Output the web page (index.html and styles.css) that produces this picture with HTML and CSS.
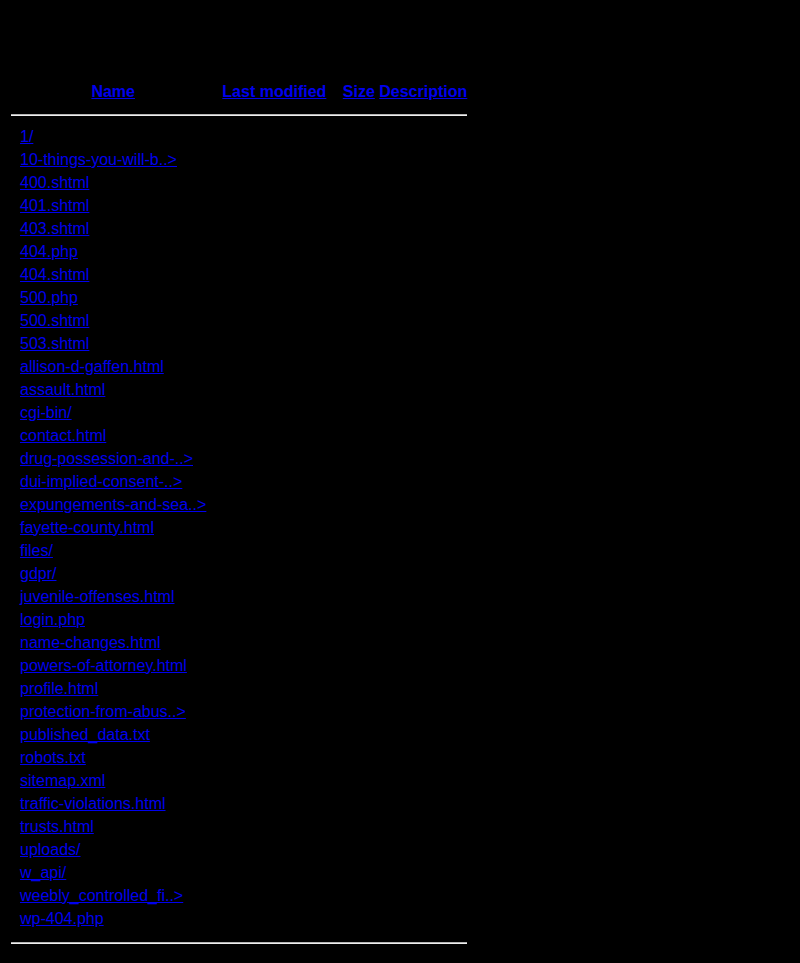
FILE: index.html
```html
<!DOCTYPE html>
<html lang="en">

<head>
    <meta charset="UTF-8">
    <title>Index of /</title>
    <link rel="stylesheet" href="styles.css">
</head>

<body>
    <h1 class="title">Index of /</h1>
    <table class="listing">
        <tr class="head">
            <th class="icon"></th>
            <th><a href="?C=N;O=D">Name</a></th>
            <th class="date"><a href="?C=M;O=A">Last modified</a></th>
            <th><a href="?C=S;O=A">Size</a></th>
            <th><a href="?C=D;O=A">Description</a></th>
        </tr>
        <tr><th colspan="5"><hr class="rule-top"></th></tr>
        <tr><td class="icon"></td><td><a href="1/">1/</a></td><td class="date">2021-03-02 09:14</td><td class="size">-</td><td>&nbsp;</td></tr>
        <tr><td class="icon"></td><td><a href="10-things-you-will-be-asked.html">10-things-you-will-b..&gt;</a></td><td class="date">2022-08-17 16:40</td><td class="size">18K</td><td>&nbsp;</td></tr>
        <tr><td class="icon"></td><td><a href="400.shtml">400.shtml</a></td><td class="date">2020-11-05 12:31</td><td class="size">228</td><td>&nbsp;</td></tr>
        <tr><td class="icon"></td><td><a href="401.shtml">401.shtml</a></td><td class="date">2020-11-05 12:31</td><td class="size">0</td><td>&nbsp;</td></tr>
        <tr><td class="icon"></td><td><a href="403.shtml">403.shtml</a></td><td class="date">2020-11-05 12:31</td><td class="size">0</td><td>&nbsp;</td></tr>
        <tr><td class="icon"></td><td><a href="404.php">404.php</a></td><td class="date">2022-08-17 16:40</td><td class="size">7.1K</td><td>&nbsp;</td></tr>
        <tr><td class="icon"></td><td><a href="404.shtml">404.shtml</a></td><td class="date">2020-11-05 12:31</td><td class="size">0</td><td>&nbsp;</td></tr>
        <tr><td class="icon"></td><td><a href="500.php">500.php</a></td><td class="date">2022-08-17 16:40</td><td class="size">3.2K</td><td>&nbsp;</td></tr>
        <tr><td class="icon"></td><td><a href="500.shtml">500.shtml</a></td><td class="date">2020-11-05 12:31</td><td class="size">0</td><td>&nbsp;</td></tr>
        <tr><td class="icon"></td><td><a href="503.shtml">503.shtml</a></td><td class="date">2020-11-05 12:31</td><td class="size">0</td><td>&nbsp;</td></tr>
        <tr><td class="icon"></td><td><a href="allison-d-gaffen.html">allison-d-gaffen.html</a></td><td class="date">2022-08-17 16:40</td><td class="size">16K</td><td>&nbsp;</td></tr>
        <tr><td class="icon"></td><td><a href="assault.html">assault.html</a></td><td class="date">2022-08-17 16:40</td><td class="size">15K</td><td>&nbsp;</td></tr>
        <tr><td class="icon"></td><td><a href="cgi-bin/">cgi-bin/</a></td><td class="date">2020-11-05 12:31</td><td class="size">-</td><td>&nbsp;</td></tr>
        <tr><td class="icon"></td><td><a href="contact.html">contact.html</a></td><td class="date">2022-08-17 16:40</td><td class="size">14K</td><td>&nbsp;</td></tr>
        <tr><td class="icon"></td><td><a href="drug-possession-and-paraphernalia.html">drug-possession-and-..&gt;</a></td><td class="date">2022-08-17 16:40</td><td class="size">15K</td><td>&nbsp;</td></tr>
        <tr><td class="icon"></td><td><a href="dui-implied-consent-law.html">dui-implied-consent-..&gt;</a></td><td class="date">2022-08-17 16:40</td><td class="size">15K</td><td>&nbsp;</td></tr>
        <tr><td class="icon"></td><td><a href="expungements-and-sealing.html">expungements-and-sea..&gt;</a></td><td class="date">2022-08-17 16:40</td><td class="size">15K</td><td>&nbsp;</td></tr>
        <tr><td class="icon"></td><td><a href="fayette-county.html">fayette-county.html</a></td><td class="date">2022-08-17 16:40</td><td class="size">15K</td><td>&nbsp;</td></tr>
        <tr><td class="icon"></td><td><a href="files/">files/</a></td><td class="date">2021-03-02 09:14</td><td class="size">-</td><td>&nbsp;</td></tr>
        <tr><td class="icon"></td><td><a href="gdpr/">gdpr/</a></td><td class="date">2021-03-02 09:14</td><td class="size">-</td><td>&nbsp;</td></tr>
        <tr><td class="icon"></td><td><a href="juvenile-offenses.html">juvenile-offenses.html</a></td><td class="date">2022-08-17 16:40</td><td class="size">15K</td><td>&nbsp;</td></tr>
        <tr><td class="icon"></td><td><a href="login.php">login.php</a></td><td class="date">2022-08-17 16:40</td><td class="size">2.4K</td><td>&nbsp;</td></tr>
        <tr><td class="icon"></td><td><a href="name-changes.html">name-changes.html</a></td><td class="date">2022-08-17 16:40</td><td class="size">15K</td><td>&nbsp;</td></tr>
        <tr><td class="icon"></td><td><a href="powers-of-attorney.html">powers-of-attorney.html</a></td><td class="date">2022-08-17 16:40</td><td class="size">15K</td><td>&nbsp;</td></tr>
        <tr><td class="icon"></td><td><a href="profile.html">profile.html</a></td><td class="date">2022-08-17 16:40</td><td class="size">13K</td><td>&nbsp;</td></tr>
        <tr><td class="icon"></td><td><a href="protection-from-abuse.html">protection-from-abus..&gt;</a></td><td class="date">2022-08-17 16:40</td><td class="size">15K</td><td>&nbsp;</td></tr>
        <tr><td class="icon"></td><td><a href="published_data.txt">published_data.txt</a></td><td class="date">2022-08-17 16:40</td><td class="size">1.9K</td><td>&nbsp;</td></tr>
        <tr><td class="icon"></td><td><a href="robots.txt">robots.txt</a></td><td class="date">2022-08-17 16:40</td><td class="size">52</td><td>&nbsp;</td></tr>
        <tr><td class="icon"></td><td><a href="sitemap.xml">sitemap.xml</a></td><td class="date">2022-08-17 16:40</td><td class="size">2.7K</td><td>&nbsp;</td></tr>
        <tr><td class="icon"></td><td><a href="traffic-violations.html">traffic-violations.html</a></td><td class="date">2022-08-17 16:40</td><td class="size">15K</td><td>&nbsp;</td></tr>
        <tr><td class="icon"></td><td><a href="trusts.html">trusts.html</a></td><td class="date">2022-08-17 16:40</td><td class="size">15K</td><td>&nbsp;</td></tr>
        <tr><td class="icon"></td><td><a href="uploads/">uploads/</a></td><td class="date">2021-03-02 09:14</td><td class="size">-</td><td>&nbsp;</td></tr>
        <tr><td class="icon"></td><td><a href="w_api/">w_api/</a></td><td class="date">2021-03-02 09:14</td><td class="size">-</td><td>&nbsp;</td></tr>
        <tr><td class="icon"></td><td><a href="weebly_controlled_files/">weebly_controlled_fi..&gt;</a></td><td class="date">2021-03-02 09:14</td><td class="size">-</td><td>&nbsp;</td></tr>
        <tr><td class="icon"></td><td><a href="wp-404.php">wp-404.php</a></td><td class="date">2022-08-17 16:40</td><td class="size">4.6K</td><td>&nbsp;</td></tr>
        <tr><th colspan="5"><hr class="rule-bottom"></th></tr>
    </table>
</body>

</html>
```

FILE: styles.css
```css
body {
    margin: 8px;
    background-color: black;
    color: black;
    font-family: "Liberation Sans", Arial, sans-serif;
    font-size: 16px;
}
h1.title {
    margin: 21px 0 13px;
    font-size: 32px;
    line-height: 37px;
}
table.listing {
    border-spacing: 2px;
}
table.listing td,
table.listing th {
    padding: 1px;
    line-height: 19px;
}
table.listing tr.head th {
    padding-bottom: 2px;
}
.icon {
    width: 5px;
}
th.date {
    width: 128px;
}
td.date,
td.size {
    text-align: right;
}
a {
    color: #0000ee;
}
hr {
    height: 0;
    border: none;
    border-top: 1px solid #b4b4b4;
    border-bottom: 1px solid #eeeeee;
}
hr.rule-top {
    margin: 8px 0 7px;
}
hr.rule-bottom {
    margin: 10px 0 8px;
}
```
